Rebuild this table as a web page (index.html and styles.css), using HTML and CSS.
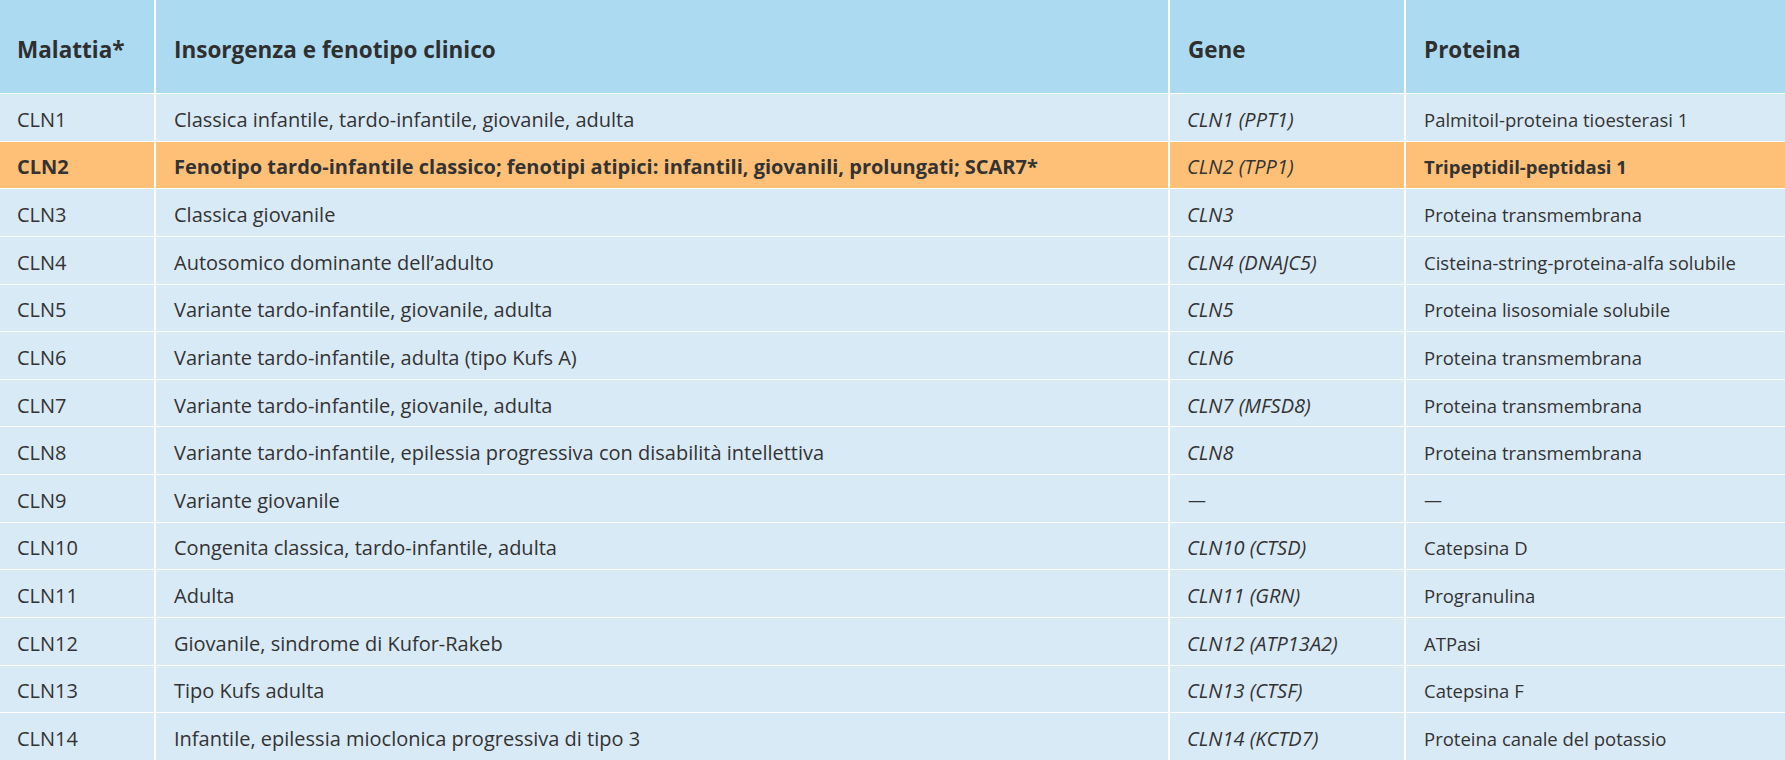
FILE: index.html
```html
<!DOCTYPE html>
<html lang="it">
<head>
<meta charset="utf-8">
<title>Malattie CLN</title>
<link rel="stylesheet" href="styles.css">
</head>
<body>
<div class="table" role="table">
  <div class="row head" role="row">
    <div class="cell">Malattia*</div>
    <div class="cell">Insorgenza e fenotipo clinico</div>
    <div class="cell">Gene</div>
    <div class="cell">Proteina</div>
  </div>
  <div class="row"><div class="cell">CLN1</div><div class="cell">Classica infantile, tardo-infantile, giovanile, adulta</div><div class="cell gene">CLN1 (PPT1)</div><div class="cell prot">Palmitoil-proteina tioesterasi 1</div></div>
  <div class="row hl"><div class="cell">CLN2</div><div class="cell">Fenotipo tardo-infantile classico; fenotipi atipici: infantili, giovanili, prolungati; SCAR7*</div><div class="cell gene">CLN2 (TPP1)</div><div class="cell prot">Tripeptidil-peptidasi 1</div></div>
  <div class="row"><div class="cell">CLN3</div><div class="cell">Classica giovanile</div><div class="cell gene">CLN3</div><div class="cell prot">Proteina transmembrana</div></div>
  <div class="row"><div class="cell">CLN4</div><div class="cell">Autosomico dominante dell’adulto</div><div class="cell gene">CLN4 (DNAJC5)</div><div class="cell prot">Cisteina-string-proteina-alfa solubile</div></div>
  <div class="row"><div class="cell">CLN5</div><div class="cell">Variante tardo-infantile, giovanile, adulta</div><div class="cell gene">CLN5</div><div class="cell prot">Proteina lisosomiale solubile</div></div>
  <div class="row"><div class="cell">CLN6</div><div class="cell">Variante tardo-infantile, adulta (tipo Kufs A)</div><div class="cell gene">CLN6</div><div class="cell prot">Proteina transmembrana</div></div>
  <div class="row"><div class="cell">CLN7</div><div class="cell">Variante tardo-infantile, giovanile, adulta</div><div class="cell gene">CLN7 (MFSD8)</div><div class="cell prot">Proteina transmembrana</div></div>
  <div class="row"><div class="cell">CLN8</div><div class="cell">Variante tardo-infantile, epilessia progressiva con disabilità intellettiva</div><div class="cell gene">CLN8</div><div class="cell prot">Proteina transmembrana</div></div>
  <div class="row"><div class="cell">CLN9</div><div class="cell">Variante giovanile</div><div class="cell dash">—</div><div class="cell prot dash">—</div></div>
  <div class="row"><div class="cell">CLN10</div><div class="cell">Congenita classica, tardo-infantile, adulta</div><div class="cell gene">CLN10 (CTSD)</div><div class="cell prot">Catepsina D</div></div>
  <div class="row"><div class="cell">CLN11</div><div class="cell">Adulta</div><div class="cell gene">CLN11 (GRN)</div><div class="cell prot">Progranulina</div></div>
  <div class="row"><div class="cell">CLN12</div><div class="cell">Giovanile, sindrome di Kufor-Rakeb</div><div class="cell gene">CLN12 (ATP13A2)</div><div class="cell prot">ATPasi</div></div>
  <div class="row"><div class="cell">CLN13</div><div class="cell">Tipo Kufs adulta</div><div class="cell gene">CLN13 (CTSF)</div><div class="cell prot">Catepsina F</div></div>
  <div class="row"><div class="cell">CLN14</div><div class="cell">Infantile, epilessia mioclonica progressiva di tipo 3</div><div class="cell gene">CLN14 (KCTD7)</div><div class="cell prot">Proteina canale del potassio</div></div>
</div>
</body>
</html>
```
FILE: styles.css
```css
html, body {
  margin: 0;
  padding: 0;
  background: #ffffff;
}
body {
  font-family: "Open Sans", "Noto Sans", sans-serif;
  color: #333333;
  overflow: hidden;
}
.table {
  display: grid;
  grid-template-columns: 154px 1012px 234px 1fr;
  grid-template-rows: 93px;
  grid-auto-rows: 46.64px;
  column-gap: 2px;
  row-gap: 1px;
  background: #ffffff;
  width: 1785px;
  height: 760px;
}
.row {
  display: contents;
}
.cell {
  display: flex;
  align-items: center;
  padding: 4px 8px 0 18px;
  background: #d9eaf7;
  font-size: 20px;
  white-space: nowrap;
  overflow: hidden;
}
.cell:first-child {
  padding-left: 17px;
}
.head .cell {
  background: #acdaf1;
  font-weight: 700;
  font-size: 22.5px;
  padding-top: 6px;
  color: #2f2f2f;
}
.gene {
  font-style: italic;
  padding-left: 17px;
}
.prot {
  font-size: 18.5px;
}
.dash {
  font-size: 18px;
}
.hl .cell {
  background: #fec077;
  font-weight: 700;
}
.hl .gene {
  font-weight: 400;
}
```
